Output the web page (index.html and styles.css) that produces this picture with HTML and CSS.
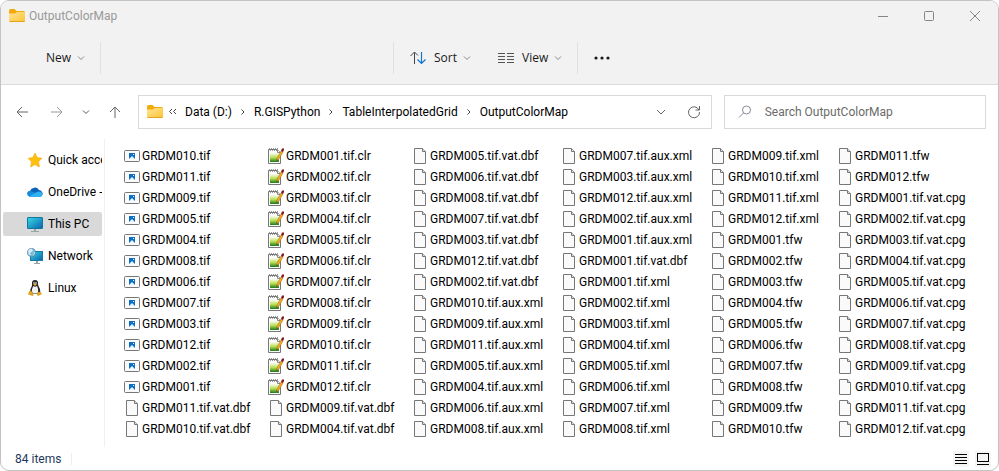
FILE: index.html
```html
<!DOCTYPE html>
<html lang="en">
<head>
<meta charset="utf-8">
<title>OutputColorMap</title>
<link rel="stylesheet" href="styles.css">
</head>
<body>
<svg class="defs" aria-hidden="true">
  <defs>
    <linearGradient id="g-folder" x1="0" y1="0" x2="1" y2="1"><stop offset="0" stop-color="#ffe394"/><stop offset="1" stop-color="#fdc536"/></linearGradient>
    <linearGradient id="g-screen" x1="0" y1="0" x2="1" y2="1"><stop offset="0" stop-color="#35dbe6"/><stop offset="1" stop-color="#0b62ad"/></linearGradient>
    <linearGradient id="g-green" x1="0" y1="0" x2="0" y2="1"><stop offset="0" stop-color="#fcfdf4"/><stop offset=".5" stop-color="#b6e052"/><stop offset="1" stop-color="#1a7a1c"/></linearGradient>
  </defs>
  <symbol id="folder" viewBox="0 0 16 14">
    <path d="M0 2Q0 0 1.500 0H5.500L7.500 2H14.500Q16 2 16 3.500V6H0z" fill="#f3ab0c"/>
    <path d="M0 4.500H6L8 3H15Q16 3 16 4V12Q16 13 15 13H1Q0 13 0 12z" fill="url(#g-folder)"/>
    <path d="M.5 12.500H15.500" stroke="#e5a01c"/>
  </symbol>
  <symbol id="image" viewBox="0 0 16 16">
    <rect x=".5" y="2.500" width="15" height="11" rx="1" fill="#fafafa" stroke="#777"/>
    <rect x="5" y="5" width="6" height="6" fill="#0b6fc4"/>
    <path d="M5 11L8 8L11 11z" fill="#e9f5fd"/><rect x="9" y="6" width="1" height="1" fill="#fff"/>
  </symbol>
  <symbol id="doc" viewBox="0 0 16 16">
    <path d="M2.500 .5H10.500L13.500 3.500V15.500H2.500z" fill="#fafafa" stroke="#777"/>
    <path d="M10.500 .5V3.500H13.500" fill="#ddd" stroke="#777"/>
  </symbol>
  <symbol id="clr" viewBox="0 0 16 16">
    <path d="M.5 1.500H9.500L12.500 4.500V15.500H.5z" fill="#fcfcfc" stroke="#777"/>
    <path d="M1 .5H10M2 2.500H9" stroke="#999" stroke-dasharray="1 1"/>
    <path d="M9.500 1.500V4.500H12.500" fill="#eee" stroke="#888"/>
    <rect x="2" y="5" width="9" height="9" fill="url(#g-green)"/>
    <path d="M8.500 13L9 10L13 3L15 4L11 11z" fill="#f5a91b" stroke="#9b6a22" stroke-width=".5"/>
    <path d="M13 3L14 .5H16V2L15 4z" fill="#87141c"/><path d="M8.500 13L8.800 11.500L9.800 12z" fill="#222"/>
  </symbol>
  <symbol id="chev" viewBox="0 0 8 8"><path d="M1 2.500L4 5.500L7 2.500" fill="none" stroke="currentColor"/></symbol>
</svg>

<div class="window">
  <header class="top">
    <div class="titlebar">
      <svg class="folder"><use href="#folder"/></svg>
      <h1 class="title">OutputColorMap</h1>
      <div class="controls">
        <button class="control" aria-label="Minimize"><svg width="12" height="12"><path d="M1 6.500H11"/></svg></button>
        <button class="control" aria-label="Maximize"><svg width="12" height="12"><rect x="1.500" y="1.500" width="9" height="9" rx="1"/></svg></button>
        <button class="control" aria-label="Close"><svg width="12" height="12"><path d="M1 1L11 11M11 1L1 11"/></svg></button>
      </div>
    </div>
    <div class="toolbar">
      <div class="tools tools-new"><button class="tool">New <svg class="chev"><use href="#chev"/></svg></button></div>
      <div class="tools tools-view">
        <button class="tool"><svg class="tool-icon" width="16" height="14" fill="none"><path d="M4.500 13V1.500M.5 5L4.500 1L8 4.500" stroke="#444"/><path d="M11.500 1V12.500M7.500 8.500L11.500 12.500L15.500 8.500" stroke="#0f74cc" stroke-width="1.200"/></svg>Sort <svg class="chev"><use href="#chev"/></svg></button>
        <button class="tool"><svg class="tool-icon" width="16" height="14"><path d="M0 2.500H7M9 2.500H16M0 5.500H7M9 5.500H16M0 8.500H7M9 8.500H16M0 11.500H7M9 11.500H16" stroke="#555"/></svg>View <svg class="chev"><use href="#chev"/></svg></button>
      </div>
      <button class="tool more" aria-label="See more"><svg width="16" height="4" fill="#1a1a1a"><circle cx="2" cy="2" r="1.600"/><circle cx="8" cy="2" r="1.600"/><circle cx="14" cy="2" r="1.600"/></svg></button>
    </div>
  </header>

  <nav class="navbar" aria-label="Location">
    <div class="arrows">
      <button class="arrow" aria-label="Back"><svg width="12" height="12"><path d="M12 6H1M6 1L1 6L6 11"/></svg></button>
      <button class="arrow forward" aria-label="Forward"><svg width="12" height="12"><path d="M0 6H11M6 1L11 6L6 11"/></svg></button>
      <button class="arrow recent" aria-label="Recent locations"><svg class="chev"><use href="#chev"/></svg></button>
      <button class="arrow" aria-label="Up"><svg width="12" height="12"><path d="M6 12V1M1 6L6 1L11 6"/></svg></button>
    </div>
    <div class="address">
      <svg class="folder"><use href="#folder"/></svg>
      <svg class="overflow" width="10" height="8"><path d="M4 1L1.500 3.500L4 6M8 1L5.500 3.500L8 6"/></svg>
      <a class="crumb" href="#">Data (D:)</a>
      <svg class="sep" width="6" height="8"><path d="M1.500 1.500L4 4L1.500 6.500"/></svg>
      <a class="crumb" href="#">R.GISPython</a>
      <svg class="sep" width="6" height="8"><path d="M1.500 1.500L4 4L1.500 6.500"/></svg>
      <a class="crumb" href="#">TableInterpolatedGrid</a>
      <svg class="sep" width="6" height="8"><path d="M1.500 1.500L4 4L1.500 6.500"/></svg>
      <a class="crumb" href="#">OutputColorMap</a>
      <div class="address-actions">
        <button class="arrow" aria-label="Previous locations"><svg width="10" height="8"><path d="M1 2L5 6L9 2"/></svg></button>
        <button class="arrow" aria-label="Refresh"><svg width="14" height="14"><path d="M12 5A5.500 5.500 0 1 0 12.500 7M12.500 1V5H8.500"/></svg></button>
      </div>
    </div>
    <label class="search">
      <svg width="14" height="14"><circle cx="8.500" cy="5" r="4"/><path d="M5.500 8L1 12.500"/></svg>
      <input class="search-input" type="text" placeholder="Search OutputColorMap" aria-label="Search OutputColorMap">
    </label>
  </nav>

  <main class="body">
    <aside class="sidebar">
      <a class="place" href="#"><svg class="place-icon" viewBox="0 0 16 16"><path d="M8 1L10.200 5.600L15 6.300L11.500 9.800L12.400 15L8 12.500L3.600 15L4.500 9.800L1 6.300L5.800 5.600z" fill="#fdc00f" stroke="#f2a70b" stroke-width=".6"/></svg><span class="place-name">Quick access</span></a>
      <a class="place" href="#"><svg class="place-icon" viewBox="0 0 16 16"><path d="M3 7A5 5 0 0 1 12 6A4 4 0 0 1 15.500 11L8 12L0 9.500A3.500 3.500 0 0 1 3 7z" fill="#0b64b8"/><path d="M2 12.500A3 3 0 0 1 3 6.800L9 9L13 13H3z" fill="#168adb"/><path d="M2 12.500L9 8.500Q12 6.500 14.500 8.500Q16.500 11 14 13H4Q3 13 2 12.500z" fill="#32b0f4"/></svg><span class="place-name">OneDrive -</span></a>
      <a class="place selected" href="#"><svg class="place-icon" viewBox="0 0 16 16"><rect x=".5" y="1.500" width="15" height="11" rx=".5" fill="url(#g-screen)" stroke="#11779f"/><path d="M7 13H9V15H12V16H4V15H7z" fill="#9aa5aa"/></svg><span class="place-name">This PC</span></a>
      <a class="place" href="#"><svg class="place-icon" viewBox="0 0 16 16"><rect x="3.500" y="3.500" width="12" height="9" fill="url(#g-screen)" stroke="#177ca6"/><path d="M9 13H11V15H13V16H7V15H9z" fill="#9aa5aa"/><circle cx="4.500" cy="4.500" r="4.200" fill="#7ab6d8" stroke="#507f9e" stroke-width=".6"/><path d="M1 3Q3 0 5 1L6 3L3 5L4 7L2 7zM7 4L8 5L6 8z" fill="#d8edf3"/></svg><span class="place-name">Network</span></a>
      <a class="place" href="#"><svg class="place-icon" viewBox="0 0 16 16"><path d="M5 4Q4.500 0 8 0Q11.500 0 11 4Q11 6 13 9Q14 12 12 14H4Q2 12 3.500 9Q5.500 6 5 4z" fill="#292929"/><path d="M6.500 6Q8 7.500 10 6Q12 10 10.500 13.500H6Q3.500 10 6.500 6z" fill="#f3f3f3"/><path d="M6.200 4.300L8 3.500L10 4.300L8 6z" fill="#efb01f"/><circle cx="7" cy="3" r=".8" fill="#fff"/><circle cx="9" cy="3" r=".8" fill="#fff"/><path d="M3.500 10L6.500 14L6 16L1 14.500L2 11.500zM10.500 12H13.500L15 14L11 16L10 15z" fill="#e0a31c"/></svg><span class="place-name">Linux</span></a>
    </aside>
    <section class="files" id="files" aria-label="Files"></section>
  </main>

  <footer class="status">
    <span class="count">84 items</span>
    <div class="layouts">
      <button class="layout" aria-label="Details"><svg width="12" height="12"><path d="M0 1.500H12M0 4.500H12M0 7.500H12M0 10.500H12"/></svg></button>
      <button class="layout" aria-label="Large icons"><svg width="12" height="12"><rect x=".5" y=".5" width="11" height="8"/><path d="M0 11.500H12"/></svg></button>
    </div>
  </footer>
</div>
<script src="files.js"></script>
</body>
</html>
```

FILE: styles.css
```css
* { box-sizing: border-box; }

body {
  margin: 0;
  background: #fff;
  color: #000;
  font: 12px/16px Roboto, "Open Sans", sans-serif;
}

button {
  display: flex;
  align-items: center;
  justify-content: center;
  padding: 0;
  border: 0;
  background: none;
  color: inherit;
  font: inherit;
}

a { color: inherit; text-decoration: none; }
svg { display: block; flex: none; }
.defs { position: absolute; width: 0; height: 0; }
.folder { width: 16px; height: 14px; }
.chev { width: 8px; height: 8px; color: #888; }

.window {
  display: flex;
  flex-direction: column;
  min-height: 100vh;
  overflow: hidden;
  border: 1px solid #c3c3c3;
  border-radius: 9px;
}

.top {
  background: #f2f2f2;
  border-bottom: 1px solid #dcdcdc;
}

.titlebar {
  display: flex;
  align-items: center;
  height: 29px;
  padding-left: 8px;
}

.title {
  margin: 0 0 0 4px;
  color: #999;
  font-size: 12px;
  font-weight: 400;
}

.controls { display: flex; margin-left: auto; }
.control { width: 46px; height: 28px; }
.control svg { fill: none; stroke: #858585; }

.toolbar {
  display: grid;
  grid-template-columns: 100px 293px 184px 1fr;
  align-items: center;
  height: 54px;
  padding-top: 2px;
  font-family: "Open Sans", "Noto Sans", sans-serif;
}

.tools { display: flex; height: 32px; border-right: 1px solid #e0e0e0; }
.tools-new { padding-left: 45px; }
.tools-view { grid-column: 3; gap: 27px; padding-left: 16px; margin-left: -1px; border-left: 1px solid #e0e0e0; }
.tool { gap: 6px; color: #1a1a1a; }
.tool-icon { margin-right: 2px; }
.more { justify-self: start; width: 48px; height: 32px; }

.navbar {
  display: flex;
  align-items: center;
  padding: 10px 12px 10px 3px;
}

.arrows { display: flex; margin-right: 6px; }
.arrow { width: 16px; height: 24px; }
.arrows .arrow { width: 35px; }
.arrows .recent { width: 23px; }
.arrow svg { fill: none; stroke: #666; }
.arrow.forward svg { stroke: #999; }
.recent .chev { color: #555; stroke: none; }

.address, .search {
  display: flex;
  align-items: center;
  height: 34px;
  border: 1px solid #d9d9d9;
}

.address { flex: 703; gap: 8px; padding: 0 9px 0 8px; }
.overflow, .sep { fill: none; stroke: #444; }
.overflow { margin: 0 -1px 0 -3px; }
.crumb { white-space: nowrap; }
.address-actions { display: flex; gap: 17px; margin-left: auto; }

.search { flex: 297; gap: 13px; margin-left: 12px; padding: 0 13px; }
.search svg { fill: none; stroke: #8a8a98; }

.search-input {
  flex: 1;
  min-width: 0;
  padding: 0;
  border: 0;
  outline: 0;
  background: none;
  font: inherit;
}
.search-input::placeholder { color: #6b6b6b; opacity: 1; }

.body { display: flex; flex: 1; }

.sidebar {
  display: flex;
  flex-direction: column;
  gap: 8px;
  width: 104px;
  padding: 9px 2px 0;
  border-right: 1px solid #f0f0f0;
}

.place {
  display: flex;
  align-items: center;
  gap: 5px;
  height: 24px;
  padding-left: 24px;
  overflow: hidden;
  border-radius: 2px;
}
.place.selected { background: #d9d9d9; }
.place-icon { width: 16px; height: 16px; }
.place-name { overflow: hidden; white-space: nowrap; }

.files {
  display: grid;
  flex: 1;
  grid-template-columns: 144px 144px 149px 149px 127px 1fr;
  padding: 6px 0 0 19px;
}

.list { margin: 0; padding: 0; list-style: none; }
.file {
  display: flex;
  align-items: center;
  gap: 2px;
  height: 21px;
  white-space: nowrap;
}
.file-icon { width: 16px; height: 16px; }

.status {
  display: flex;
  align-items: center;
  justify-content: space-between;
  height: 23px;
  padding: 0 7px 0 14px;
}
.count { padding-right: 10px; border-right: 1px solid #eee; color: #1e395b; line-height: 12px; }
.layouts { display: flex; gap: 6px; }
.layout { width: 16px; height: 16px; background: #f5f5f5; }
.layout svg { fill: none; stroke: #000; }
```

FILE: files.js
```js
const columns = [
  ["010.tif", "011.tif", "009.tif", "005.tif", "004.tif", "008.tif", "006.tif", "007.tif", "003.tif", "012.tif", "002.tif", "001.tif", "011.tif.vat.dbf", "010.tif.vat.dbf"],
  ["001.tif.clr", "002.tif.clr", "003.tif.clr", "004.tif.clr", "005.tif.clr", "006.tif.clr", "007.tif.clr", "008.tif.clr", "009.tif.clr", "010.tif.clr", "011.tif.clr", "012.tif.clr", "009.tif.vat.dbf", "004.tif.vat.dbf"],
  ["005.tif.vat.dbf", "006.tif.vat.dbf", "008.tif.vat.dbf", "007.tif.vat.dbf", "003.tif.vat.dbf", "012.tif.vat.dbf", "002.tif.vat.dbf", "010.tif.aux.xml", "009.tif.aux.xml", "011.tif.aux.xml", "005.tif.aux.xml", "004.tif.aux.xml", "006.tif.aux.xml", "008.tif.aux.xml"],
  ["007.tif.aux.xml", "003.tif.aux.xml", "012.tif.aux.xml", "002.tif.aux.xml", "001.tif.aux.xml", "001.tif.vat.dbf", "001.tif.xml", "002.tif.xml", "003.tif.xml", "004.tif.xml", "005.tif.xml", "006.tif.xml", "007.tif.xml", "008.tif.xml"],
  ["009.tif.xml", "010.tif.xml", "011.tif.xml", "012.tif.xml", "001.tfw", "002.tfw", "003.tfw", "004.tfw", "005.tfw", "006.tfw", "007.tfw", "008.tfw", "009.tfw", "010.tfw"],
  ["011.tfw", "012.tfw", "001.tif.vat.cpg", "002.tif.vat.cpg", "003.tif.vat.cpg", "004.tif.vat.cpg", "005.tif.vat.cpg", "006.tif.vat.cpg", "007.tif.vat.cpg", "008.tif.vat.cpg", "009.tif.vat.cpg", "010.tif.vat.cpg", "011.tif.vat.cpg", "012.tif.vat.cpg"]
];

function iconFor(name) {
  if (name.endsWith(".tif")) return "image";
  if (name.endsWith(".clr")) return "clr";
  return "doc";
}

document.getElementById("files").innerHTML = columns.map(names =>
  `<ul class="list">${names.map(name =>
    `<li class="file"><svg class="file-icon"><use href="#${iconFor(name)}"/></svg>GRDM${name}</li>`
  ).join("")}</ul>`
).join("");
```
